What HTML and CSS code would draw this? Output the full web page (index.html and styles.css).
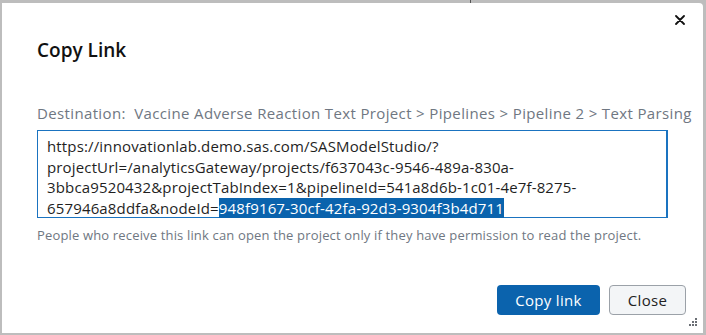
FILE: index.html
```html
<!DOCTYPE html>
<html lang="en">
<head>
    <meta charset="UTF-8">
    <title>Copy Link</title>
    <link rel="stylesheet" href="styles.css">
</head>
<body>
    <div class="backdrop-tick"></div>
    <div class="dialog">
        <div class="dialog-top">
            <button class="close-x" aria-label="Close">
                <svg width="10" height="10" viewBox="0 0 10 10"><path d="M1 1 L9 9 M9 1 L1 9" stroke="#111" stroke-width="1.8" stroke-linecap="round"/></svg>
            </button>
        </div>
        <h1 class="title">Copy Link</h1>
        <div class="destination">Destination:&nbsp; Vaccine Adverse Reaction Text Project &gt; Pipelines &gt; Pipeline 2 &gt; Text Parsing</div>
        <div class="link-box">https://innovationlab.demo.sas.com/SASModelStudio/?<br>projectUrl=/analyticsGateway/projects/f637043c-9546-489a-830a-<br>3bbca9520432&amp;projectTabIndex=1&amp;pipelineId=541a8d6b-1c01-4e7f-8275-<br>657946a8ddfa&amp;nodeId=<span class="sel">948f9167-30cf-42fa-92d3-9304f3b4d711</span></div>
        <div class="hint">People who receive this link can open the project only if they have permission to read the project.</div>
        <div class="actions">
            <button class="btn btn-primary">Copy link</button>
            <button class="btn btn-secondary">Close</button>
        </div>
        <div class="grip">
            <svg width="8" height="8" viewBox="0 0 8 8" fill="#6b6f75">
                <rect x="6" y="0" width="2" height="2"/>
                <rect x="3" y="3" width="2" height="2"/><rect x="6" y="3" width="2" height="2"/>
                <rect x="0" y="6" width="2" height="2"/><rect x="3" y="6" width="2" height="2"/><rect x="6" y="6" width="2" height="2"/>
            </svg>
        </div>
    </div>
</body>
</html>
```

FILE: styles.css
```css
body {
    margin: 0;
    padding: 3px 3px 2px 2px;
    background-color: #bdbdbd;
    font-family: 'Open Sans', sans-serif;
    position: relative;
}
.backdrop-tick {
    position: absolute;
    left: 470px;
    top: 0;
    width: 1px;
    height: 3px;
    background: #555;
}
.dialog {
    position: relative;
    background: #fff;
    border-radius: 0 4px 0 0;
    height: 330px;
    box-sizing: border-box;
    padding: 0 17px 0 35px;
    display: flex;
    flex-direction: column;
}
.dialog-top {
    display: flex;
    justify-content: flex-end;
    height: 30px;
    margin-right: -4px;
}
.close-x {
    border: none;
    background: none;
    padding: 0;
    width: 20px;
    height: 30px;
    margin-top: 2px;
    cursor: pointer;
}
.title {
    margin: 5px 0 0;
    font-size: 19px;
    font-weight: 600;
    color: #111;
    line-height: 24px;
}
.destination {
    margin-top: 41px;
    font-size: 15px;
    letter-spacing: 0.36px;
    color: #6f7782;
    line-height: 20px;
    white-space: nowrap;
}
.link-box {
    margin-top: 7px;
    width: 631px;
    height: 88px;
    box-sizing: border-box;
    border: 1px solid #1a73c0;
    border-right-width: 2px;
    padding: 5px 9px;
    font-size: 15px;
    letter-spacing: 0.15px;
    line-height: 20.5px;
    color: #1f1f1f;
    white-space: nowrap;
}
.sel {
    background: #0a63ad;
    color: #fff;
}
.hint {
    margin-top: 8px;
    font-size: 13px;
    letter-spacing: 0.16px;
    color: #6f7782;
    line-height: 18px;
}
.actions {
    margin-top: 41px;
    display: flex;
    justify-content: flex-end;
    gap: 9px;
}
.btn {
    height: 30px;
    border-radius: 4px;
    font-family: 'Open Sans', sans-serif;
    font-size: 15px;
    letter-spacing: 0.3px;
    cursor: pointer;
}
.btn-primary {
    width: 103px;
    background: #0b63ad;
    color: #fff;
    border: none;
}
.btn-secondary {
    width: 77px;
    background: #f3f5f7;
    color: #222;
    border: 1px solid #9ba1a8;
}
.grip {
    position: absolute;
    right: 6px;
    bottom: 7px;
    line-height: 0;
}
```
